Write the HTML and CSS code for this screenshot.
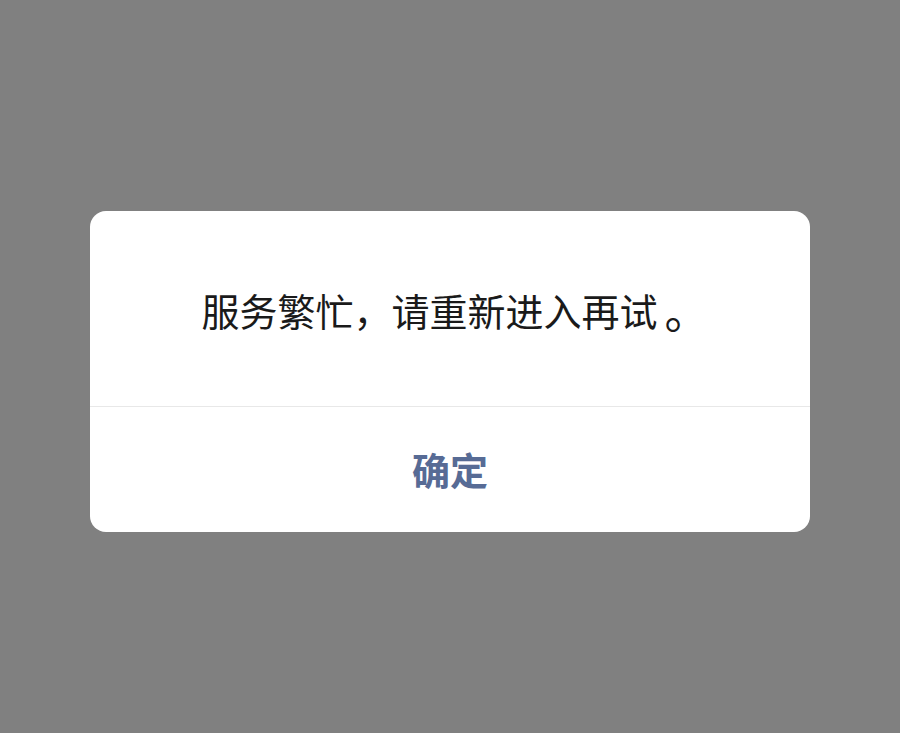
FILE: index.html
```html
<!DOCTYPE html>
<html lang="zh-CN">
<head>
<meta charset="utf-8">
<link rel="stylesheet" href="styles.css">
</head>
<body>
<div class="dialog">
  <div class="dialog-body">服务繁忙，请重新进入再试<span class="dot">。</span></div>
  <div class="dialog-footer">确定</div>
</div>
</body>
</html>
```

FILE: styles.css
```css
html, body {
  margin: 0;
  padding: 0;
  background: #808080;
  width: 900px;
  height: 733px;
  overflow: hidden;
}
body {
  font-family: "Noto Sans CJK SC", "Noto Sans", sans-serif;
  padding-top: 211px;
  box-sizing: border-box;
}
.dialog {
  margin-left: 90px;
  width: 720px;
  background: #fff;
  border-radius: 16px;
  overflow: hidden;
}
.dialog-body {
  height: 196px;
  display: flex;
  align-items: center;
  justify-content: center;
  font-size: 38px;
  color: #1a1a1a;
  border-bottom: 1px solid #e8e8e8;
  padding-top: 2px;
  padding-left: 10px;
  box-sizing: border-box;
}
.dot {
  display: inline-block;
  font-size: 44px;
  line-height: 38px;
  padding-left: 7px;
}
.dialog-footer {
  height: 125px;
  display: flex;
  align-items: center;
  justify-content: center;
  font-size: 38px;
  font-weight: bold;
  color: #576b95;
  padding-bottom: 3px;
  box-sizing: border-box;
}
```
